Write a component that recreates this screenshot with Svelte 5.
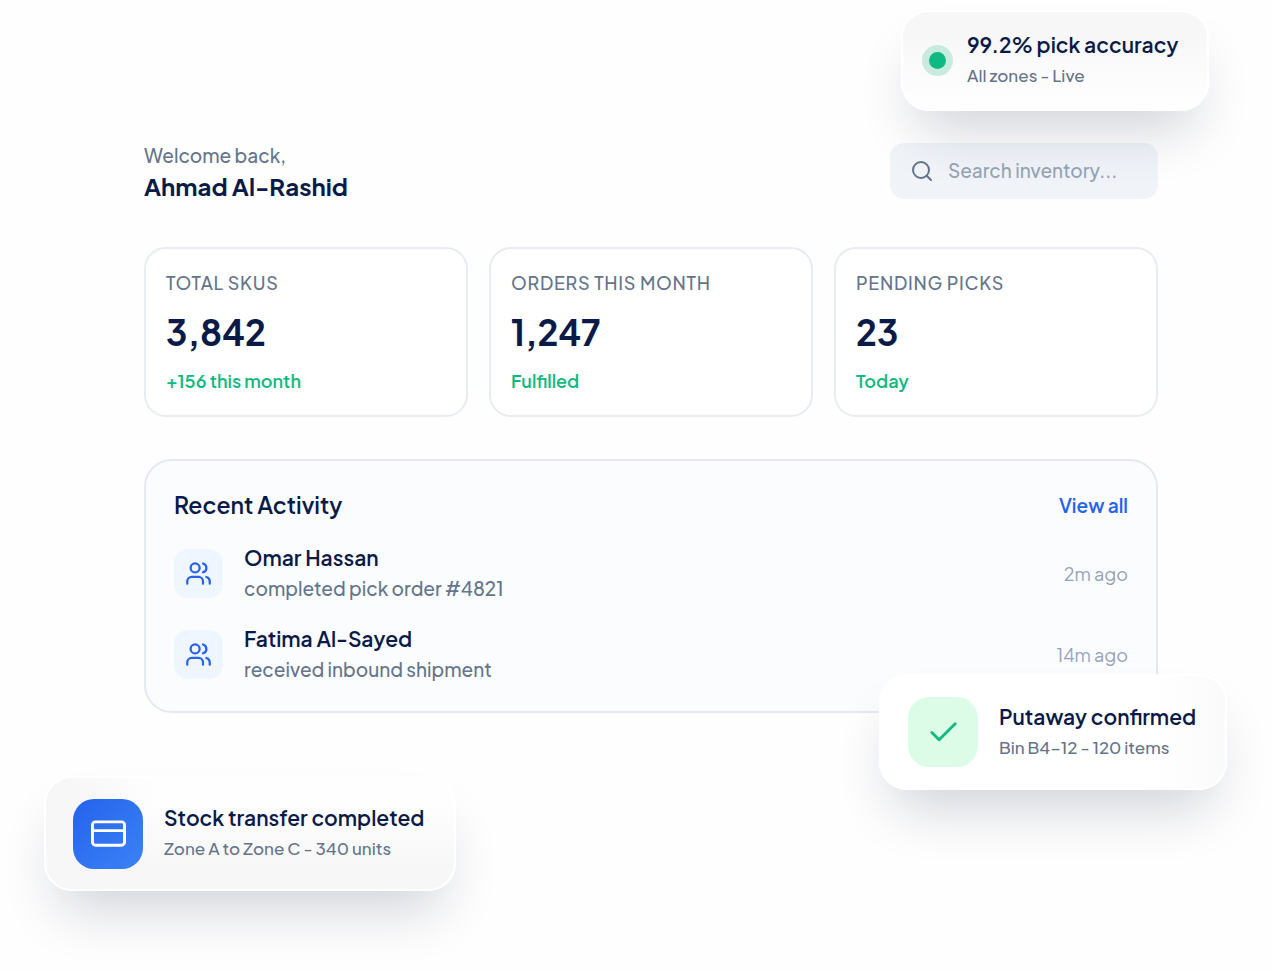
<script>
  let query = $state('');

  const stats = [
    { label: 'Total SKUs', value: '3,842', note: '+156 this month' },
    { label: 'Orders this month', value: '1,247', note: 'Fulfilled' },
    { label: 'Pending picks', value: '23', note: 'Today' },
  ];

  const activity = [
    { name: 'Omar Hassan', action: 'completed pick order #4821', time: '2m ago' },
    { name: 'Fatima Al-Sayed', action: 'received inbound shipment', time: '14m ago' },
  ];
</script>

<div class="stage">
  <main>
    <header>
      <div>
        <p class="welcome">Welcome back,</p>
        <h1>Ahmad Al-Rashid</h1>
      </div>
      <label class="search">
        <svg viewBox="0 0 24 24" aria-hidden="true"><circle cx="11" cy="11" r="8" /><path d="m21 21-4.3-4.3" /></svg>
        <input type="search" placeholder="Search inventory..." aria-label="Search inventory" bind:value={query} />
      </label>
    </header>

    <section class="stats">
      {#each stats as s}
        <article class="stat">
          <h2>{s.label}</h2>
          <p class="value">{s.value}</p>
          <p class="note">{s.note}</p>
        </article>
      {/each}
    </section>

    <section class="activity">
      <div class="head">
        <h2>Recent Activity</h2>
        <a href="#activity">View all</a>
      </div>
      <ul>
        {#each activity as a}
          <li>
            <span class="avatar">
              <svg viewBox="0 0 24 24" aria-hidden="true">
                <path d="M16 21v-2a4 4 0 0 0-4-4H6a4 4 0 0 0-4 4v2" />
                <circle cx="9" cy="7" r="4" />
                <path d="M22 21v-2a4 4 0 0 0-3-3.87" />
                <path d="M16 3.13a4 4 0 0 1 0 7.75" />
              </svg>
            </span>
            <div class="who">
              <strong>{a.name}</strong>
              <span>{a.action}</span>
            </div>
            <time>{a.time}</time>
          </li>
        {/each}
      </ul>
    </section>
  </main>

  <aside class="toast accuracy">
    <span class="dot"></span>
    <div class="text">
      <strong>99.2% pick accuracy</strong>
      <p>All zones - Live</p>
    </div>
  </aside>

  <aside class="toast putaway">
    <span class="badge green">
      <svg viewBox="0 0 24 24" aria-hidden="true"><path d="M20 6 9 17l-5-5" /></svg>
    </span>
    <div class="text">
      <strong>Putaway confirmed</strong>
      <p>Bin B4-12 - 120 items</p>
    </div>
  </aside>

  <aside class="toast transfer">
    <span class="badge blue">
      <svg viewBox="0 0 24 24" aria-hidden="true"><rect x="1" y="4" width="22" height="16" rx="2" /><path d="M1 10h22" /></svg>
    </span>
    <div class="text">
      <strong>Stock transfer completed</strong>
      <p>Zone A to Zone C - 340 units</p>
    </div>
  </aside>
</div>

<style>
  :global(body) { margin: 0; background: #fefefe; }

  .stage {
    position: relative;
    min-height: 100vh;
    box-sizing: border-box;
    padding: 140px 113px 64px 144px;
    overflow: hidden;
    font-family: "Plus Jakarta Sans", Inter, sans-serif;
    color: #0a1a48;
  }
  h1, h2, p, ul { margin: 0; padding: 0; }
  svg { fill: none; stroke: currentColor; stroke-width: 2; stroke-linecap: round; stroke-linejoin: round; }

  header { display: flex; align-items: center; justify-content: space-between; margin-bottom: 45px; }
  .welcome { font-size: 19px; line-height: 31px; font-weight: 500; color: #64748b; }
  h1 { font-size: 24px; line-height: 31px; font-weight: 700; }

  .search {
    display: flex;
    align-items: center;
    gap: 14px;
    width: 268px;
    height: 56px;
    box-sizing: border-box;
    padding: 0 20px;
    border-radius: 14px;
    background: #f0f4f9;
    color: #64748b;
  }
  .search svg { width: 24px; height: 24px; flex: none; }
  .search input {
    flex: 1;
    min-width: 0;
    padding: 0 0 3px;
    border: 0;
    outline: 0;
    background: none;
    font: inherit;
    font-size: 19px;
    font-weight: 500;
    color: #0a1a48;
  }
  .search input::placeholder { color: #94a3b8; opacity: 1; }

  .stats { display: grid; grid-template-columns: repeat(3, 1fr); gap: 21px; margin-bottom: 42px; }
  .stat { padding: 20px; border: 2px solid #e8ebf2; border-radius: 22px; background: #fff; }
  .stat h2 { font-size: 18px; line-height: 28px; font-weight: 500; letter-spacing: 0.04em; text-transform: uppercase; color: #64748b; }
  .value { margin: 11px 0; font-size: 35px; line-height: 48px; font-weight: 700; }
  .note { font-size: 18px; line-height: 28px; font-weight: 600; color: #10b981; }

  .activity { padding: 28px 28px 27px; border: 2px solid #e4e9f1; border-radius: 28px; background: #fafcfe; }
  .head { display: flex; align-items: center; justify-content: space-between; margin-bottom: 22px; }
  .head h2 { font-size: 23px; line-height: 32px; font-weight: 600; }
  .head a { font-size: 19px; font-weight: 600; color: #2563eb; text-decoration: none; }
  ul { display: grid; gap: 21px; list-style: none; }
  li { display: flex; align-items: center; gap: 21px; }
  .avatar { display: grid; place-items: center; width: 49px; height: 49px; border-radius: 14px; background: #eff6ff; color: #2563eb; }
  .avatar svg { width: 27px; height: 27px; }
  .who { flex: 1; display: grid; line-height: 30px; }
  .who strong { font-size: 21px; font-weight: 600; }
  .who span { font-size: 19px; font-weight: 500; color: #64748b; }
  time { font-size: 18px; color: #94a3b8; }

  .toast {
    position: absolute;
    display: flex;
    align-items: center;
    gap: 21px;
    box-sizing: border-box;
    border: 2px solid #fff;
    border-radius: 28px;
    box-shadow: 0 32px 56px -16px rgba(15, 23, 62, 0.2);
  }
  .text { padding-bottom: 2px; white-space: nowrap; }
  .text strong { display: block; font-size: 21px; line-height: 31px; font-weight: 600; }
  .text p { font-size: 17px; line-height: 30px; font-weight: 500; color: #64748b; }

  .accuracy { top: 10px; right: 62px; width: 308px; height: 101px; gap: 14px; padding: 0 19px; background: linear-gradient(#f7f7f7 20%, #fefefe 90%); }
  .putaway { top: 674px; right: 44px; width: 348px; height: 116px; padding: 0 27px; background: linear-gradient(90deg, #fff 80%, #fafafa); }
  .transfer {
    top: 776px;
    left: 44px;
    width: 412px;
    height: 115px;
    padding: 0 27px;
    background:
      radial-gradient(ellipse 110px 120px at 0 20%, #f7f7f7 30%, transparent),
      linear-gradient(#fefefe 25%, #f7f7f7 80%);
  }

  .dot { flex: none; width: 17px; height: 17px; border: 7px solid #c8ebdf; border-radius: 50%; background: #10b981; }
  .badge { display: grid; place-items: center; flex: none; width: 70px; height: 70px; border-radius: 21px; }
  .badge svg { width: 35px; height: 35px; }
  .green { background: #dcfce7; color: #10b981; }
  .blue { background: linear-gradient(135deg, #2563eb, #3b82f6); color: #fff; }
</style>
